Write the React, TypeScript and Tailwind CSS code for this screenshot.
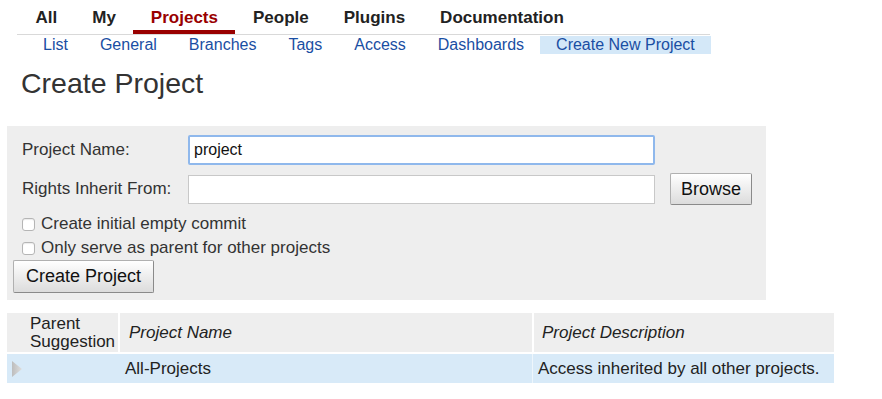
import React from "react";

const topItems = ["All", "My", "Projects", "People", "Plugins", "Documentation"];
const subItems = ["List", "General", "Branches", "Tags", "Access", "Dashboards", "Create New Project"];

function Checkbox() {
  return (
    <span className="inline-block w-[13px] h-[13px] rounded-[3px] border border-[#b5b5b5] bg-white shadow-[inset_0_1px_1px_rgba(0,0,0,0.08)]" />
  );
}

export default function App() {
  return (
    <div className="min-h-[399px] w-[882px] bg-white text-[#222] font-['Liberation_Sans',Arial,sans-serif]">
      {/* Top nav */}
      <div className="ml-[17px] w-[693px] flex border-b border-[#d9d9d9] pl-[1px]">
        {topItems.map((t) => (
          <div
            key={t}
            className={
              "px-[17.5px] pt-[8px] pb-[2px] text-[17px] leading-[20px] font-bold border-b-[4px] " +
              (t === "Projects" ? "text-[#990000] border-[#990000]" : "text-[#222] border-transparent")
            }
          >
            {t}
          </div>
        ))}
      </div>
      {/* Sub nav */}
      <div className="ml-[27px] flex mt-[1px]">
        {subItems.map((t) => (
          <div
            key={t}
            className={
              "px-[16px] text-[16px] leading-[18px] text-[#1a4ea3] " +
              (t === "Create New Project" ? "bg-[#d4e8f8]" : "")
            }
          >
            {t}
          </div>
        ))}
      </div>
      {/* Heading */}
      <h1 className="ml-[21px] mt-[12px] text-[28.5px] leading-[34px] text-[#333] font-normal">Create Project</h1>

      {/* Form panel */}
      <div className="ml-[7px] mt-[26px] w-[759px] h-[174px] bg-[#eeeeee] pt-[9px] text-[17px] text-[#333]">
        <div className="flex items-center pl-[15px]">
          <div className="w-[166px]">Project Name:</div>
          <div className="w-[467px] h-[30px] bg-white border-2 border-[#8fb8ec] rounded-[2px] flex items-center pl-[4px] text-[16px] text-[#111]">
            project
          </div>
        </div>
        <div className="flex items-center pl-[15px] mt-[8px]">
          <div className="w-[166px]">Rights Inherit From:</div>
          <div className="w-[467px] h-[29px] bg-white border border-[#c8c8c8]" />
          <button className="ml-[15px] w-[82px] h-[32px] text-[18px] text-[#111] bg-gradient-to-b from-white to-[#dcdcdc] border border-[#b0b0b0] border-b-[#8a8a8a] border-r-[#8a8a8a] rounded-[2px]">
            Browse
          </button>
        </div>
        <div className="flex items-center gap-[6px] pl-[15px] h-[24px] mt-[7px]">
          <Checkbox />
          <span>Create initial empty commit</span>
        </div>
        <div className="flex items-center gap-[6px] pl-[15px] h-[24px]">
          <Checkbox />
          <span>Only serve as parent for other projects</span>
        </div>
        <div className="pl-[6px]">
          <button className="w-[141px] h-[33px] text-[18px] text-[#111] bg-gradient-to-b from-white to-[#dcdcdc] border border-[#b0b0b0] border-b-[#8a8a8a] border-r-[#8a8a8a] rounded-[2px]">
            Create Project
          </button>
        </div>
      </div>

      {/* Table */}
      <div className="ml-[7px] mt-[13px] w-[827px] text-[17px] text-[#222]">
        <div className="flex h-[39px] bg-[#eeeeee]">
          <div className="w-[111px] pl-[23px] pt-[2px] leading-[18px] whitespace-nowrap">
            Parent
            <br />
            Suggestion
          </div>
          <div className="w-[414px] border-l-2 border-white pl-[9px] flex items-center italic">Project Name</div>
          <div className="flex-1 border-l-2 border-white pl-[8px] flex items-center italic">Project Description</div>
        </div>
        <div className="flex h-[29px] mt-[2px] bg-[#d8eaf8]">
          <div className="w-[111px] flex items-center pl-[5px]">
            <svg width="11" height="16" viewBox="0 0 11 16">
              <defs>
                <linearGradient id="tri" x1="0" y1="0" x2="1" y2="0">
                  <stop offset="0" stopColor="#bdbdbd" />
                  <stop offset="1" stopColor="#dedede" />
                </linearGradient>
              </defs>
              <polygon points="0,0 10,8 0,16" fill="url(#tri)" />
            </svg>
          </div>
          <div className="w-[414px] pl-[7px] flex items-center">All-Projects</div>
          <div className="flex-1 border-l border-[#eef6fc] pl-[5px] flex items-center">Access inherited by all other projects.</div>
        </div>
      </div>
    </div>
  );
}
